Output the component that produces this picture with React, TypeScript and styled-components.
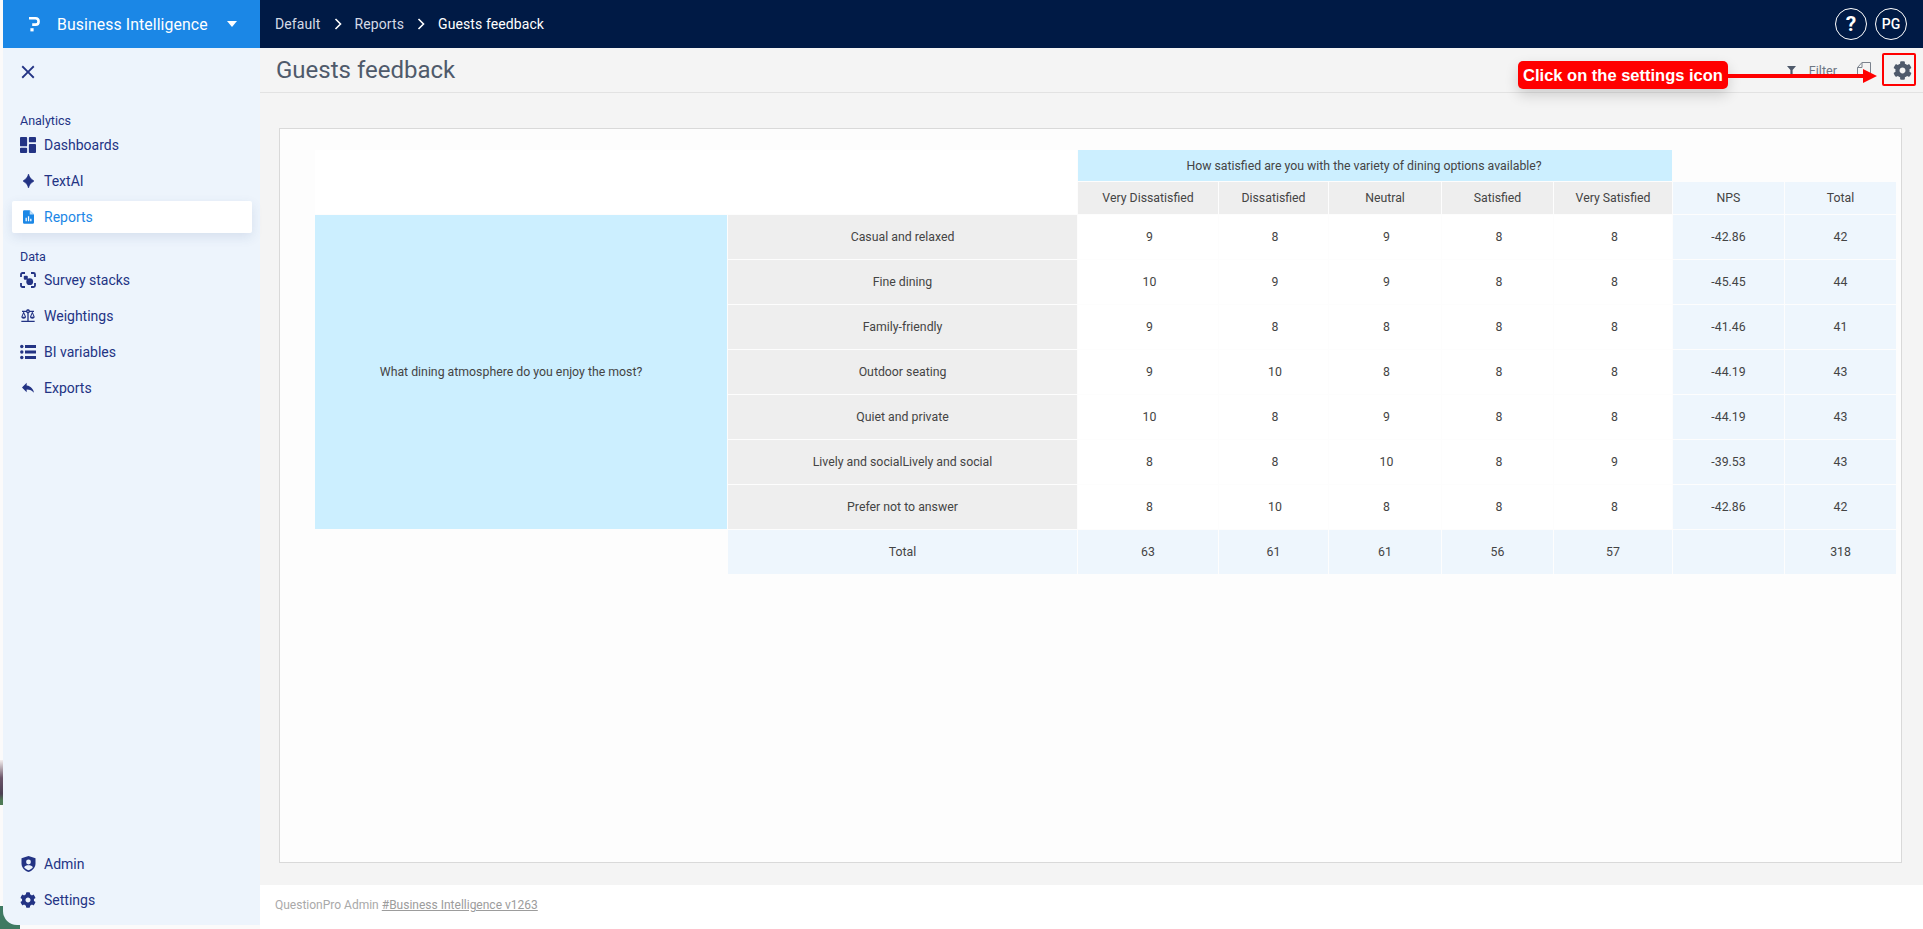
import React from "react";
import styled, { createGlobalStyle } from "styled-components";
import { FaCog } from "react-icons/fa";
import { MdReply, MdBalance, MdClose } from "react-icons/md";

const Global = createGlobalStyle`
  html, body { margin: 0; padding: 0; background: #fff; overflow: hidden; }
  * { box-sizing: border-box; }
  body { font-family: Roboto, "Open Sans", "Liberation Sans", sans-serif; }
`;

const Shell = styled.div`
  position: relative;
  width: 1923px;
  height: 929px;
  display: flex;
  padding-left: 3px;
  background: #fbfafa;
  overflow: hidden;
`;
const WallpaperLeft = styled.div`
  position: absolute;
  left: 0;
  top: 760px;
  width: 3px;
  height: 45px;
  background: linear-gradient(#f3eeee 0%, #6a5468 40%, #4b3f52 75%, #4f7a55 90%);
`;
const WallpaperCorner = styled.div`
  position: absolute;
  left: 0;
  bottom: 0;
  width: 20px;
  height: 23px;
  background: #3f7a62;
`;
const Side = styled.aside`
  position: relative;
  width: 257px;
  height: 925px;
  flex: none;
  display: flex;
  flex-direction: column;
  background: #edf4fc;
  border-bottom-left-radius: 14px;
`;
const Brand = styled.div`
  height: 48px;
  flex: none;
  display: flex;
  align-items: center;
  background: #1b87e6;
  color: #fff;
  padding-left: 25px;
`;
const BrandName = styled.span`
  margin-left: 15px;
  font-size: 15.8px;
  letter-spacing: 0.1px;
  color: #fff;
`;
const Caret = styled.span`
  width: 0;
  height: 0;
  margin-left: 19px;
  border-left: 5.5px solid transparent;
  border-right: 5.5px solid transparent;
  border-top: 6px solid #fff;
`;
const CloseRow = styled.div`
  height: 48px;
  flex: none;
  display: flex;
  align-items: center;
  padding-left: 14px;
  color: #233384;
`;
const Group = styled.div<{ $mt: number }>`
  margin-top: ${(p) => p.$mt}px;
  padding: 0 8px 0 9px;
  display: flex;
  flex-direction: column;
  gap: 4px;
`;
const GroupLabel = styled.div<{ $mb: number }>`
  height: 16px;
  margin-bottom: ${(p) => p.$mb}px;
  padding-left: 8px;
  font-size: 12.5px;
  line-height: 16px;
  color: #233384;
`;
const Item = styled.div<{ $active?: boolean }>`
  height: 32px;
  display: flex;
  align-items: center;
  gap: 8px;
  padding: 0 0 1px 8px;
  font-size: 14px;
  border-radius: 2px;
  color: ${(p) => (p.$active ? "#1b87e6" : "#233384")};
  background: ${(p) => (p.$active ? "#fff" : "transparent")};
  box-shadow: ${(p) => (p.$active ? "0 4px 12px rgba(40,70,130,0.12)" : "none")};
`;
const IconBox = styled.span`
  width: 16px;
  height: 16px;
  flex: none;
  display: flex;
  align-items: center;
  justify-content: center;
`;
const Spacer = styled.div`
  flex: 1;
`;
const BottomGroup = styled(Group)`
  padding-bottom: 9px;
`;
const Main = styled.div`
  flex: 1;
  min-width: 0;
  display: flex;
  flex-direction: column;
`;
const TopBar = styled.header`
  height: 48px;
  flex: none;
  display: flex;
  align-items: center;
  background: #001a45;
  padding: 0 16px 0 15px;
  color: #fff;
`;
const Crumb = styled.span<{ $current?: boolean }>`
  font-size: 14px;
  letter-spacing: 0.1px;
  color: ${(p) => (p.$current ? "#fff" : "#d5dbe6")};
`;
const CrumbSep = styled.span`
  width: 34px;
  display: flex;
  justify-content: center;
`;
const TopRight = styled.div`
  margin-left: auto;
  display: flex;
  gap: 8px;
`;
const Round = styled.div`
  width: 32px;
  height: 32px;
  border-radius: 50%;
  border: 1px solid #fff;
  display: flex;
  align-items: center;
  justify-content: center;
  color: #fff;
  font-size: 14px;
  font-weight: 500;
`;
const Question = styled(Round)`
  font-size: 21px;
  font-weight: 700;
`;
const TitleBar = styled.div`
  height: 45px;
  flex: none;
  display: flex;
  align-items: center;
  padding: 0 11px 0 16px;
  background: #f4f4f4;
  border-bottom: 1px solid #e2e2e2;
`;
const Title = styled.h1`
  margin: 0;
  font-size: 24px;
  font-weight: 400;
  letter-spacing: 0;
  color: #4f5a6b;
`;
const Tools = styled.div`
  margin-left: auto;
  display: flex;
  align-items: center;
  color: #4f5a6b;
`;
const FilterLabel = styled.span`
  margin-left: 13px;
  margin-right: 20px;
  font-size: 12.6px;
  color: #6d7683;
`;
const GearWrap = styled.span`
  margin-left: 22px;
  display: flex;
`;
const Content = styled.main`
  flex: 1;
  min-height: 0;
  padding: 35px 21px 22px 19px;
  background: #f4f4f4;
  display: flex;
`;
const Panel = styled.section`
  flex: 1;
  border: 1px solid #d9d9d9;
  background: #fdfdfd;
  padding: 20px 0 0 34px;
`;
const Table = styled.table`
  table-layout: fixed;
  width: 1583px;
  border-collapse: separate;
  border-spacing: 1px;
  font-size: 12.3px;
  color: #444;
  text-align: center;
`;
const Cell = styled.td<{ $kind?: "cyan" | "grey" | "pale" | "white" | "none"; $h?: number; $pl?: number; $pr?: number }>`
  padding: 0 ${(p) => p.$pr ?? 0}px 0 ${(p) => p.$pl ?? 0}px;
  height: ${(p) => p.$h ?? 44}px;
  font-weight: 400;
  text-align: center;
  vertical-align: middle;
  background: ${(p) =>
    ({ cyan: "#ccefff", grey: "#eeeeee", pale: "#eef6fd", white: "#ffffff", none: "transparent" }[p.$kind ?? "white"])};
`;
const Footer = styled.footer`
  height: 44px;
  flex: none;
  display: flex;
  align-items: center;
  gap: 3px;
  padding-left: 15px;
  padding-bottom: 4px;
  background: #fff;
  font-size: 12px;
  color: #a9a9a9;
`;
const FooterLink = styled.span`
  text-decoration: underline;
  color: #9c9c9c;
`;
const Callout = styled.div`
  position: absolute;
  left: 1518px;
  top: 61px;
  width: 210px;
  height: 28px;
  border-radius: 5px;
  background: #ff0000;
  color: #fff;
  font-family: "Liberation Sans", Arial, sans-serif;
  font-weight: 700;
  font-size: 16.5px;
  line-height: 28px;
  text-align: center;
  white-space: nowrap;
  box-shadow: 0 6px 14px rgba(0, 0, 0, 0.16);
`;
const ArrowArt = styled.svg`
  position: absolute;
  left: 1727px;
  top: 66px;
`;
const Highlight = styled.div`
  position: absolute;
  left: 1882px;
  top: 53px;
  width: 34px;
  height: 33px;
  border: 2px solid #ff0000;
  border-radius: 2px;
`;

const Logo = () => (
  <svg width="14" height="16" viewBox="0 0 14 16" fill="none">
    <path d="M1 2.2H7.5C11.6 2.2 11.6 8.6 7.5 8.6H4.2" stroke="#fff" strokeWidth="2.6" />
    <rect x="2.4" y="12.2" width="3.2" height="3.2" fill="#fff" />
  </svg>
);
const Chevron = () => (
  <svg width="8" height="12" viewBox="0 0 8 12" fill="none">
    <path d="M1.5 1 L6.5 6 L1.5 11" stroke="#fff" strokeWidth="1.6" />
  </svg>
);
const DashIcon = () => (
  <svg width="16" height="16" viewBox="3 3 18 18" fill="#233384">
    <path d="M3 12.5V4a1 1 0 0 1 1-1h6a1 1 0 0 1 1 1v8.500a1 1 0 0 1-1 1H4a1 1 0 0 1-1-1zm0 8V16a1 1 0 0 1 1-1h6a1 1 0 0 1 1 1v4a1 1 0 0 1-1 1H4a1 1 0 0 1-1-1zm10 0V12a1 1 0 0 1 1-1h6a1 1 0 0 1 1 1v8a1 1 0 0 1-1 1h-6a1 1 0 0 1-1-1zM13 8V4a1 1 0 0 1 1-1h6a1 1 0 0 1 1 1v4a1 1 0 0 1-1 1h-6a1 1 0 0 1-1-1z" />
  </svg>
);
const SparkIcon = () => (
  <svg width="11" height="14" viewBox="0 0 11 14" fill="#233384">
    <path d="M5.500 0 C6.200 2.800 7.800 5.200 11 7 C7.800 8.800 6.200 11.200 5.500 14 C4.800 11.200 3.200 8.800 0 7 C3.200 5.200 4.800 2.800 5.500 0Z" stroke="#233384" strokeWidth="0.6" />
  </svg>
);
const ReportIcon = () => (
  <svg width="11" height="14" viewBox="0 0 13 16">
    <path d="M1.500 0H8l5 5v9.500a1.500 1.500 0 0 1-1.500 1.500h-10A1.500 1.500 0 0 1 0 14.500v-13A1.500 1.500 0 0 1 1.500 0z" fill="#1b87e6" />
    <path d="M8 0v5h5z" fill="#bcdcf7" />
    <path d="M3 9h1.500v4H3zM5.800 7h1.500v6H5.800zM8.500 10H10v3H8.500z" fill="#fff" />
  </svg>
);
const StackIcon = () => (
  <svg width="16" height="16" viewBox="0 0 16 16" fill="none">
    <path d="M1 5V2.500A1.500 1.500 0 0 1 2.500 1H5M11 1h2.500A1.500 1.500 0 0 1 15 2.500V5M15 11v2.500a1.500 1.500 0 0 1-1.500 1.500H11M5 15H2.500A1.500 1.500 0 0 1 1 13.500V11" stroke="#233384" strokeWidth="1.800" />
    <circle cx="9.700" cy="9.700" r="3.400" fill="#233384" />
    <rect x="3.800" y="3.800" width="4" height="4" rx="1" fill="#233384" />
  </svg>
);
const ListIcon = () => (
  <svg width="16" height="16" viewBox="0 0 16 16" fill="#233384">
    <circle cx="1.800" cy="2.500" r="1.700" />
    <circle cx="1.800" cy="8" r="1.700" />
    <circle cx="1.800" cy="13.500" r="1.700" />
    <rect x="5" y="1" width="11" height="3" />
    <rect x="5" y="6.500" width="11" height="3" />
    <rect x="5" y="12" width="11" height="3" />
  </svg>
);
const AdminIcon = () => (
  <svg width="15" height="16" viewBox="0 0 14 16">
    <path d="M7 0l7 2.200v5.300c0 4-2.900 7.200-7 8.500-4.100-1.300-7-4.500-7-8.500V2.200z" fill="#233384" />
    <circle cx="7" cy="6" r="2.400" fill="#edf4fc" />
    <path d="M2.600 11.300C3.500 9.900 5 9.300 7 9.300s3.500.6 4.400 2C10.400 12.700 8.800 13.800 7 14.300 5.200 13.800 3.600 12.700 2.600 11.300z" fill="#edf4fc" />
  </svg>
);
const FunnelIcon = () => (
  <svg width="9" height="9" viewBox="0 0 9 9" fill="#4f5a6b">
    <path d="M0 0H9L5.600 4V9H3.400V4Z" />
  </svg>
);
const CopyIcon = () => (
  <svg width="14" height="16" viewBox="0 0 14 16" fill="none" stroke="#7b828d" strokeWidth="1">
    <path d="M0.500 5.500L5 0.500H13.500V15.500H0.500Z" />
    <path d="M5 0.500V5.500H0.500" />
  </svg>
);

const columns = ["Very Dissatisfied", "Dissatisfied", "Neutral", "Satisfied", "Very Satisfied"];
const colWidths = [412, 349, 140, 109, 112, 111, 118, 111, 111];
const rows: [string, number, number, number, number, number, string, number][] = [
  ["Casual and relaxed", 9, 8, 9, 8, 8, "-42.86", 42],
  ["Fine dining", 10, 9, 9, 8, 8, "-45.45", 44],
  ["Family-friendly", 9, 8, 8, 8, 8, "-41.46", 41],
  ["Outdoor seating", 9, 10, 8, 8, 8, "-44.19", 43],
  ["Quiet and private", 10, 8, 9, 8, 8, "-44.19", 43],
  ["Lively and socialLively and social", 8, 8, 10, 8, 9, "-39.53", 43],
  ["Prefer not to answer", 8, 10, 8, 8, 8, "-42.86", 42],
];
const totals = [63, 61, 61, 56, 57];

const NavItem = ({ icon, label, active }: { icon: React.ReactNode; label: string; active?: boolean }) => (
  <Item $active={active}>
    <IconBox>{icon}</IconBox>
    {label}
  </Item>
);

export default function App() {
  return (
    <Shell>
      <Global />
      <WallpaperLeft />
      <WallpaperCorner />
      <Side>
        <Brand>
          <Logo />
          <BrandName>Business Intelligence</BrandName>
          <Caret />
        </Brand>
        <CloseRow>
          <MdClose size={22} />
        </CloseRow>
        <Group $mt={17}>
          <GroupLabel $mb={-4}>Analytics</GroupLabel>
          <NavItem icon={<DashIcon />} label="Dashboards" />
          <NavItem icon={<SparkIcon />} label="TextAI" />
          <NavItem icon={<ReportIcon />} label="Reports" active />
        </Group>
        <Group $mt={16}>
          <GroupLabel $mb={-5}>Data</GroupLabel>
          <NavItem icon={<StackIcon />} label="Survey stacks" />
          <NavItem icon={<MdBalance size={20} color="#233384" />} label="Weightings" />
          <NavItem icon={<ListIcon />} label="BI variables" />
          <NavItem icon={<MdReply size={19} color="#233384" />} label="Exports" />
        </Group>
        <Spacer />
        <BottomGroup $mt={0}>
          <NavItem icon={<AdminIcon />} label="Admin" />
          <NavItem icon={<FaCog size={16} color="#233384" />} label="Settings" />
        </BottomGroup>
      </Side>
      <Main>
        <TopBar>
          <Crumb>Default</Crumb>
          <CrumbSep>
            <Chevron />
          </CrumbSep>
          <Crumb>Reports</Crumb>
          <CrumbSep>
            <Chevron />
          </CrumbSep>
          <Crumb $current>Guests feedback</Crumb>
          <TopRight>
            <Question>?</Question>
            <Round>PG</Round>
          </TopRight>
        </TopBar>
        <TitleBar>
          <Title>Guests feedback</Title>
          <Tools>
            <FunnelIcon />
            <FilterLabel>Filter</FilterLabel>
            <CopyIcon />
            <GearWrap>
              <FaCog size={19} />
            </GearWrap>
          </Tools>
        </TitleBar>
        <Content>
          <Panel>
            <Table>
              <colgroup>
                {colWidths.map((w, i) => (
                  <col key={i} style={{ width: w }} />
                ))}
              </colgroup>
              <thead>
                <tr>
                  <Cell as="th" colSpan={2} rowSpan={2} $kind="white" $h={31} />
                  <Cell as="th" colSpan={5} $kind="cyan" $h={31} $pr={22}>
                    How satisfied are you with the variety of dining options available?
                  </Cell>
                  <Cell as="th" colSpan={2} $kind="none" $h={31} />
                </tr>
                <tr>
                  {columns.map((c) => (
                    <Cell as="th" key={c} $kind="grey" $h={32}>
                      {c}
                    </Cell>
                  ))}
                  <Cell as="th" $kind="pale" $h={32}>
                    NPS
                  </Cell>
                  <Cell as="th" $kind="pale" $h={32}>
                    Total
                  </Cell>
                </tr>
              </thead>
              <tbody>
                {rows.map((r, i) => (
                  <tr key={r[0]}>
                    {i === 0 && (
                      <Cell rowSpan={7} $kind="cyan" $pr={20}>
                        What dining atmosphere do you enjoy the most?
                      </Cell>
                    )}
                    <Cell $kind="grey">{r[0]}</Cell>
                    {r.slice(1, 6).map((v, j) => (
                      <Cell key={j} $pl={3}>
                        {v}
                      </Cell>
                    ))}
                    <Cell $kind="pale">{r[6]}</Cell>
                    <Cell $kind="pale">{r[7]}</Cell>
                  </tr>
                ))}
                <tr>
                  <Cell $kind="none" />
                  <Cell $kind="pale">Total</Cell>
                  {totals.map((v, j) => (
                    <Cell key={j} $kind="pale">
                      {v}
                    </Cell>
                  ))}
                  <Cell $kind="pale" />
                  <Cell $kind="pale">318</Cell>
                </tr>
              </tbody>
            </Table>
          </Panel>
        </Content>
        <Footer>
          QuestionPro Admin <FooterLink>#Business Intelligence v1263</FooterLink>
        </Footer>
      </Main>
      <Callout>Click on the settings icon</Callout>
      <ArrowArt width="152" height="18" viewBox="0 0 152 18">
        <path d="M0 8H136V3L150 10L136 17V12H0Z" fill="#ff0000" />
      </ArrowArt>
      <Highlight />
    </Shell>
  );
}
